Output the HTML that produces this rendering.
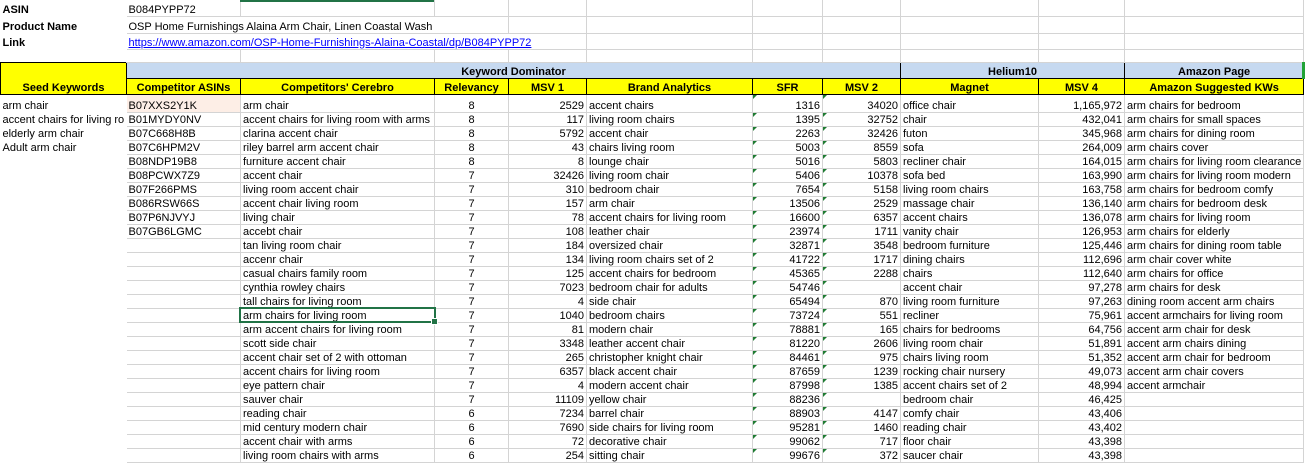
<!DOCTYPE html>
<html><head><meta charset="utf-8">
<style>
html,body{margin:0;padding:0;background:#fff;width:1305px;height:464px;overflow:hidden;position:relative}
table{border-collapse:collapse;table-layout:fixed;font-family:"Liberation Sans",Arial,sans-serif;font-size:11px;color:#000;position:absolute;left:0;top:0}
td{padding:0 2px;white-space:nowrap;overflow:hidden;line-height:12px;vertical-align:bottom;border-right:1px solid #d4d4d4;border-bottom:1px solid #d4d4d4}
td.a{border:none;padding-left:2px}
.top td{border-color:#d4d4d4}
.top td.lbl{font-weight:bold;border:none}
.top td.nb{border-right:none}
.h td{font-weight:bold;text-align:center;border:1px solid #000;font-size:11px}
.bl{background:#c6d9f0}
.ye{background:#ffff00}
.r{text-align:right}
.c{text-align:center}
.t{position:relative}
.t:before{content:"";position:absolute;left:0;top:0;border-top:4px solid #1e7b32;border-right:4px solid transparent}
a{color:#0000ff;text-decoration:underline}
.sel{position:absolute;left:239px;top:307px;width:193px;height:12px;border:2px solid #217346}
.sel:after{content:"";position:absolute;right:-4px;bottom:-4px;width:5px;height:5px;background:#217346;border:1px solid #fff}
.gtop{position:absolute;left:240px;top:0;width:194px;height:2px;background:#217346}
.gr{position:absolute;left:1302px;top:62px;width:3px;height:17px;background:#21a336}
</style></head><body>
<table>
<colgroup><col style="width:126px"><col style="width:114px"><col style="width:194px"><col style="width:74px"><col style="width:78px"><col style="width:166px"><col style="width:70px"><col style="width:78px"><col style="width:138px"><col style="width:86px"><col style="width:178px"></colgroup>
<tr class="top" style="height:16px"><td class="lbl">ASIN</td><td>B084PYPP72</td><td></td><td></td><td></td><td></td><td></td><td></td><td></td><td></td><td></td></tr>
<tr class="top" style="height:17px"><td class="lbl">Product Name</td><td colspan="3" style="overflow:visible">OSP Home Furnishings Alaina Arm Chair, Linen Coastal Wash</td><td></td><td></td><td></td><td></td><td></td><td></td><td></td></tr>
<tr class="top" style="height:16px"><td class="lbl">Link</td><td colspan="4"><a>https://www.amazon.com/OSP-Home-Furnishings-Alaina-Coastal/dp/B084PYPP72</a></td><td></td><td></td><td></td><td></td><td></td><td></td></tr>
<tr class="top" style="height:13px"><td class="lbl"></td><td></td><td></td><td></td><td></td><td></td><td></td><td></td><td></td><td></td><td></td></tr>
<tr class="h" style="height:16px"><td class="ye" rowspan="2" style="vertical-align:bottom">Seed Keywords</td><td class="bl" colspan="7">Keyword Dominator</td><td class="bl" colspan="2">Helium10</td><td class="bl">Amazon Page</td></tr>
<tr class="h" style="height:16px"><td class="ye">Competitor ASINs</td><td class="ye">Competitors' Cerebro</td><td class="ye">Relevancy</td><td class="ye">MSV 1</td><td class="ye">Brand Analytics</td><td class="ye">SFR</td><td class="ye">MSV 2</td><td class="ye">Magnet</td><td class="ye">MSV 4</td><td class="ye">Amazon Suggested KWs</td></tr>
<tr style="height:18px"><td class="a">arm chair</td><td style="background:#fdeee6">B07XXS2Y1K</td><td>arm chair</td><td class="c">8</td><td class="r">2529</td><td>accent chairs</td><td class="r t">1316</td><td class="r t">34020</td><td>office chair</td><td class="r">1,165,972</td><td>arm chairs for bedroom</td></tr>
<tr style="height:14px"><td class="a">accent chairs for living ro</td><td>B01MYDY0NV</td><td>accent chairs for living room with arms</td><td class="c">8</td><td class="r">117</td><td>living room chairs</td><td class="r t">1395</td><td class="r t">32752</td><td>chair</td><td class="r">432,041</td><td>arm chairs for small spaces</td></tr>
<tr style="height:14px"><td class="a">elderly arm chair</td><td>B07C668H8B</td><td>clarina accent chair</td><td class="c">8</td><td class="r">5792</td><td>accent chair</td><td class="r t">2263</td><td class="r t">32426</td><td>futon</td><td class="r">345,968</td><td>arm chairs for dining room</td></tr>
<tr style="height:14px"><td class="a">Adult arm chair</td><td>B07C6HPM2V</td><td>riley barrel arm accent chair</td><td class="c">8</td><td class="r">43</td><td>chairs living room</td><td class="r t">5003</td><td class="r t">8559</td><td>sofa</td><td class="r">264,009</td><td>arm chairs cover</td></tr>
<tr style="height:14px"><td class="a"></td><td>B08NDP19B8</td><td>furniture accent chair</td><td class="c">8</td><td class="r">8</td><td>lounge chair</td><td class="r t">5016</td><td class="r t">5803</td><td>recliner chair</td><td class="r">164,015</td><td>arm chairs for living room clearance</td></tr>
<tr style="height:14px"><td class="a"></td><td>B08PCWX7Z9</td><td>accent chair</td><td class="c">7</td><td class="r">32426</td><td>living room chair</td><td class="r t">5406</td><td class="r t">10378</td><td>sofa bed</td><td class="r">163,990</td><td>arm chairs for living room modern</td></tr>
<tr style="height:14px"><td class="a"></td><td>B07F266PMS</td><td>living room accent chair</td><td class="c">7</td><td class="r">310</td><td>bedroom chair</td><td class="r t">7654</td><td class="r t">5158</td><td>living room chairs</td><td class="r">163,758</td><td>arm chairs for bedroom comfy</td></tr>
<tr style="height:14px"><td class="a"></td><td>B086RSW66S</td><td>accent chair living room</td><td class="c">7</td><td class="r">157</td><td>arm chair</td><td class="r t">13506</td><td class="r t">2529</td><td>massage chair</td><td class="r">136,140</td><td>arm chairs for bedroom desk</td></tr>
<tr style="height:14px"><td class="a"></td><td>B07P6NJVYJ</td><td>living chair</td><td class="c">7</td><td class="r">78</td><td>accent chairs for living room</td><td class="r t">16600</td><td class="r t">6357</td><td>accent chairs</td><td class="r">136,078</td><td>arm chairs for living room</td></tr>
<tr style="height:14px"><td class="a"></td><td>B07GB6LGMC</td><td>accebt chair</td><td class="c">7</td><td class="r">108</td><td>leather chair</td><td class="r t">23974</td><td class="r t">1711</td><td>vanity chair</td><td class="r">126,953</td><td>arm chairs for elderly</td></tr>
<tr style="height:14px"><td class="a"></td><td></td><td>tan living room chair</td><td class="c">7</td><td class="r">184</td><td>oversized chair</td><td class="r t">32871</td><td class="r t">3548</td><td>bedroom furniture</td><td class="r">125,446</td><td>arm chairs for dining room table</td></tr>
<tr style="height:14px"><td class="a"></td><td></td><td>accenr chair</td><td class="c">7</td><td class="r">134</td><td>living room chairs set of 2</td><td class="r t">41722</td><td class="r t">1717</td><td>dining chairs</td><td class="r">112,696</td><td>arm chair cover white</td></tr>
<tr style="height:14px"><td class="a"></td><td></td><td>casual chairs family room</td><td class="c">7</td><td class="r">125</td><td>accent chairs for bedroom</td><td class="r t">45365</td><td class="r t">2288</td><td>chairs</td><td class="r">112,640</td><td>arm chairs for office</td></tr>
<tr style="height:14px"><td class="a"></td><td></td><td>cynthia rowley chairs</td><td class="c">7</td><td class="r">7023</td><td>bedroom chair for adults</td><td class="r t">54746</td><td class="r t"></td><td>accent chair</td><td class="r">97,278</td><td>arm chairs for desk</td></tr>
<tr style="height:14px"><td class="a"></td><td></td><td>tall chairs for living room</td><td class="c">7</td><td class="r">4</td><td>side chair</td><td class="r t">65494</td><td class="r t">870</td><td>living room furniture</td><td class="r">97,263</td><td>dining room accent arm chairs</td></tr>
<tr style="height:14px"><td class="a"></td><td></td><td>arm chairs for living room</td><td class="c">7</td><td class="r">1040</td><td>bedroom chairs</td><td class="r t">73724</td><td class="r t">551</td><td>recliner</td><td class="r">75,961</td><td>accent armchairs for living room</td></tr>
<tr style="height:14px"><td class="a"></td><td></td><td>arm accent chairs for living room</td><td class="c">7</td><td class="r">81</td><td>modern chair</td><td class="r t">78881</td><td class="r t">165</td><td>chairs for bedrooms</td><td class="r">64,756</td><td>accent arm chair for desk</td></tr>
<tr style="height:14px"><td class="a"></td><td></td><td>scott side chair</td><td class="c">7</td><td class="r">3348</td><td>leather accent chair</td><td class="r t">81220</td><td class="r t">2606</td><td>living room chair</td><td class="r">51,891</td><td>accent arm chairs dining</td></tr>
<tr style="height:14px"><td class="a"></td><td></td><td>accent chair set of 2 with ottoman</td><td class="c">7</td><td class="r">265</td><td>christopher knight chair</td><td class="r t">84461</td><td class="r t">975</td><td>chairs living room</td><td class="r">51,352</td><td>accent arm chair for bedroom</td></tr>
<tr style="height:14px"><td class="a"></td><td></td><td>accent chairs for living room</td><td class="c">7</td><td class="r">6357</td><td>black accent chair</td><td class="r t">87659</td><td class="r t">1239</td><td>rocking chair nursery</td><td class="r">49,073</td><td>accent arm chair covers</td></tr>
<tr style="height:14px"><td class="a"></td><td></td><td>eye pattern chair</td><td class="c">7</td><td class="r">4</td><td>modern accent chair</td><td class="r t">87998</td><td class="r t">1385</td><td>accent chairs set of 2</td><td class="r">48,994</td><td>accent armchair</td></tr>
<tr style="height:14px"><td class="a"></td><td></td><td>sauver chair</td><td class="c">7</td><td class="r">11109</td><td>yellow chair</td><td class="r t">88236</td><td class="r t"></td><td>bedroom chair</td><td class="r">46,425</td><td></td></tr>
<tr style="height:14px"><td class="a"></td><td></td><td>reading chair</td><td class="c">6</td><td class="r">7234</td><td>barrel chair</td><td class="r t">88903</td><td class="r t">4147</td><td>comfy chair</td><td class="r">43,406</td><td></td></tr>
<tr style="height:14px"><td class="a"></td><td></td><td>mid century modern chair</td><td class="c">6</td><td class="r">7690</td><td>side chairs for living room</td><td class="r t">95281</td><td class="r t">1460</td><td>reading chair</td><td class="r">43,402</td><td></td></tr>
<tr style="height:14px"><td class="a"></td><td></td><td>accent chair with arms</td><td class="c">6</td><td class="r">72</td><td>decorative chair</td><td class="r t">99062</td><td class="r t">717</td><td>floor chair</td><td class="r">43,398</td><td></td></tr>
<tr style="height:14px"><td class="a"></td><td></td><td>living room chairs with arms</td><td class="c">6</td><td class="r">254</td><td>sitting chair</td><td class="r t">99676</td><td class="r t">372</td><td>saucer chair</td><td class="r">43,398</td><td></td></tr>
</table>
<div class="gtop"></div>
<div class="gr"></div>
<div class="sel"></div>
</body></html>
